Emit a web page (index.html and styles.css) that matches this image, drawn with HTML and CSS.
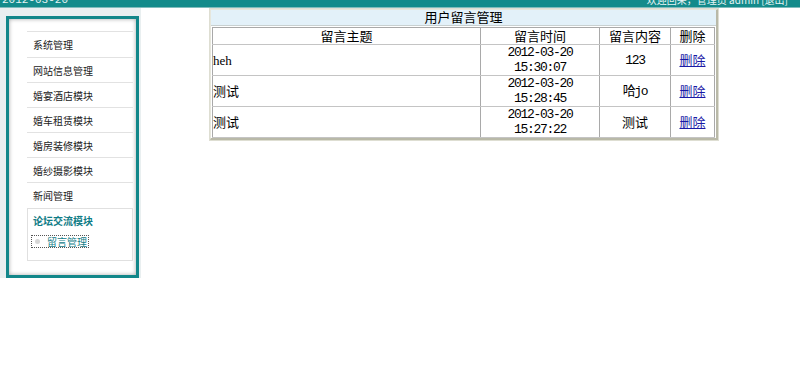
FILE: index.html
```html
<!DOCTYPE html>
<html>
<head>
<meta charset="utf-8">
<link rel="stylesheet" href="styles.css">
</head>
<body>
<div class="topbar">
  <span class="date">2012-03-20</span>
  <span class="welcome">欢迎回来，管理员 admin [退出]</span>
</div>
<div class="main">
  <div class="sidebar">
    <div class="box">
      <ul class="menu">
        <li>系统管理</li>
        <li>网站信息管理</li>
        <li>婚宴酒店模块</li>
        <li>婚车租赁模块</li>
        <li>婚房装修模块</li>
        <li>婚纱摄影模块</li>
        <li>新闻管理</li>
      </ul>
      <div class="active">
        <div class="active-title">论坛交流模块</div>
        <div class="sub"><span class="dot"></span>留言管理</div>
      </div>
    </div>
  </div>
  <div class="content">
    <table class="outer">
      <tr><td class="title">用户留言管理</td></tr>
      <tr><td class="wrap">
        <table class="grid">
          <tr class="head">
            <td class="c1">留言主题</td>
            <td class="c2">留言时间</td>
            <td class="c3">留言内容</td>
            <td class="c4">删除</td>
          </tr>
          <tr>
            <td class="left">heh</td>
            <td class="mono">2012-03-20<br>15:30:07</td>
            <td class="mono">123</td>
            <td><a href="#">删除</a></td>
          </tr>
          <tr>
            <td class="left">测试</td>
            <td class="mono">2012-03-20<br>15:28:45</td>
            <td class="mono">哈jo</td>
            <td><a href="#">删除</a></td>
          </tr>
          <tr>
            <td class="left">测试</td>
            <td class="mono">2012-03-20<br>15:27:22</td>
            <td>测试</td>
            <td><a href="#">删除</a></td>
          </tr>
        </table>
      </td></tr>
    </table>
  </div>
</div>
</body>
</html>
```
FILE: styles.css
```css
html, body {
  margin: 0;
  padding: 0;
  background: #ffffff;
}
body {
  font-family: "Liberation Serif", "Noto Sans CJK SC", serif;
  font-size: 13px;
  color: #000;
}
.topbar {
  height: 7px;
  background: #138b8b;
  border-bottom: 1px solid #7fbcbc;
  overflow: hidden;
  display: flex;
  justify-content: space-between;
  color: #e6f4f4;
  font-family: "Liberation Mono", "Noto Sans CJK SC", monospace;
  font-size: 11px;
  line-height: 11px;
}
.topbar .date {
  margin-top: -5px;
  padding-left: 2px;
}
.topbar .welcome {
  margin-top: -6px;
  padding-right: 12px;
  font-family: "Noto Sans CJK SC", sans-serif;
  font-size: 10px;
}
.main {
  display: flex;
  align-items: flex-start;
}
.sidebar {
  width: 135px;
  background: #e9eff0;
  padding: 8px 0 0 6px;
}
.box {
  border: 3px solid #12878a;
  background: #fff;
  box-shadow: inset 0 0 4px rgba(0, 0, 0, 0.35);
  padding: 12px 3px 14px 18px;
  width: 106px;
}
.menu {
  list-style: none;
  margin: 0;
  padding: 0;
}
.menu li {
  height: 25px;
  line-height: 25px;
  border-top: 1px solid #e2e2e2;
  padding-left: 6px;
  font-family: "Noto Sans CJK SC", sans-serif;
  font-size: 10px;
  color: #222;
  box-sizing: border-box;
}
.menu li:first-child {
  height: 26px;
  line-height: 26px;
}
.active {
  border: 1px solid #e0e0e0;
  margin-top: 1px;
  height: 53px;
  box-sizing: border-box;
  padding: 4px 0 0 5px;
  font-family: "Noto Sans CJK SC", sans-serif;
  font-size: 10px;
}
.active-title {
  color: #0f7c86;
  font-weight: bold;
  line-height: 16px;
}
.sub {
  display: inline-flex;
  align-items: center;
  white-space: nowrap;
  margin-top: 6px;
  margin-left: -2px;
  height: 11px;
  padding: 0 1px 0 3px;
  border: 1px dotted #555;
  color: #15808a;
  line-height: 11px;
}
.dot {
  width: 5px;
  height: 5px;
  border-radius: 50%;
  background: #d6d6d6;
  margin-right: 7px;
  flex: none;
}
.content {
  margin-left: 69px;
  padding-top: 1px;
}
.outer {
  width: 508px;
  border-collapse: separate;
  border-spacing: 0;
  border-top: 1px solid #e6e6dc;
  border-left: 1px solid #e6e6dc;
  border-right: 2px solid #b9b9a8;
  border-bottom: 2px solid #b9b9a8;
  box-shadow: 0 0 0 1px #deded2;
}
.outer td {
  padding: 0;
}
.title {
  height: 15px;
  background: #e3f1f9;
  text-align: center;
  font-size: 13px;
  line-height: 15px;
  border-bottom: 1px solid #c8d0d0;
}
.wrap {
  padding: 1px 1px 0 1px !important;
}
.grid {
  width: 100%;
  border-collapse: collapse;
}
.grid td {
  border: 1px solid #a9a9a9;
  border-bottom-color: #c4c4c4;
  text-align: center;
  height: 28px;
  padding: 0;
  line-height: 15px;
}
.grid .head td {
  height: 16px;
  line-height: 15px;
}
.grid .c1 { width: 267px; }
.grid .c2 { width: 118px; }
.grid .c3 { width: 70px; }
.grid td.left {
  text-align: left;
}
.grid td.mono {
  font-family: "Liberation Mono", "Noto Sans CJK SC", monospace;
  letter-spacing: -1.3px;
}
.grid a {
  color: #1a1aa6;
  text-decoration: underline;
}
```
